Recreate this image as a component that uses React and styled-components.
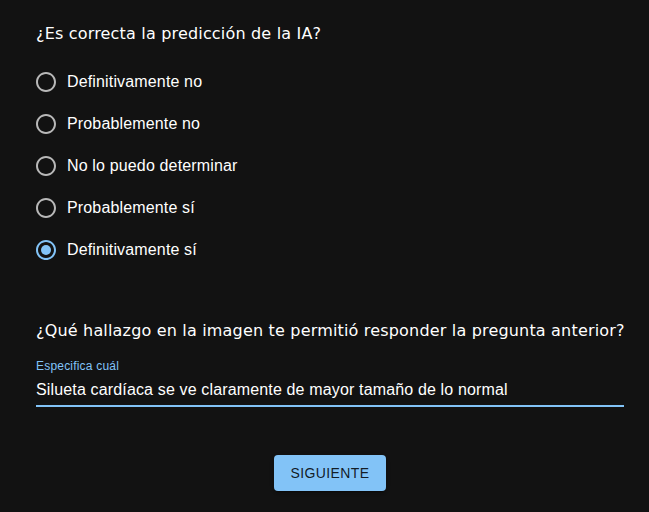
import React, { useState } from "react";
import styled, { createGlobalStyle } from "styled-components";

const Global = createGlobalStyle`
  html, body { margin: 0; padding: 0; background: #121212; }
  body { font-family: "Liberation Sans", Arial, sans-serif; color: #fff; }
  * { box-sizing: border-box; }
`;

const ACCENT = "#82c3f7";

const Page = styled.div`
  width: 649px;
  min-height: 512px;
  background: #121212;
  padding: 22px 25px 0 36px;
  display: flex;
  flex-direction: column;
`;

const Question = styled.div`
  font-family: "DejaVu Sans", Verdana, sans-serif;
  font-size: 16px;
  line-height: 24px;
  letter-spacing: 0.18px;
  white-space: nowrap;
  color: #fff;
  margin-top: ${(p) => p.$mt || 0}px;
`;

const Group = styled.div`
  display: flex;
  flex-direction: column;
  margin-top: 15px;
`;

const Row = styled.label`
  display: flex;
  align-items: center;
  height: 42px;
  margin-left: -11px;
  cursor: pointer;
`;

const RadioBox = styled.span`
  width: 42px;
  height: 42px;
  padding: 9px;
  display: flex;
  align-items: center;
  justify-content: center;
  color: ${(p) => (p.$checked ? ACCENT : "rgba(255,255,255,0.7)")};
  svg { display: block; }
`;

const RowText = styled.span`
  font-size: 16px;
  line-height: 24px;
  letter-spacing: 0.15px;
  color: #fff;
`;

const Field = styled.div`
  display: flex;
  flex-direction: column;
  margin-top: 15px;
`;

const FieldLabel = styled.div`
  font-size: 12px;
  line-height: 16px;
  letter-spacing: 0.2px;
  color: ${ACCENT};
`;

const Input = styled.div`
  font-size: 16px;
  line-height: 23px;
  letter-spacing: 0.15px;
  padding: 4px 0 4px;
  color: #fff;
  border-bottom: 2px solid ${ACCENT};
`;

const Footer = styled.div`
  display: flex;
  justify-content: center;
  margin-top: 48px;
`;

const Button = styled.button`
  background: ${ACCENT};
  color: rgba(0, 0, 0, 0.87);
  border: none;
  border-radius: 4px;
  height: 36px;
  width: 112px;
  font-family: "Liberation Sans", Arial, sans-serif;
  font-size: 14px;
  font-weight: 500;
  letter-spacing: 0.4px;
  text-transform: uppercase;
  box-shadow: 0 3px 1px -2px rgba(0,0,0,0.2), 0 2px 2px 0 rgba(0,0,0,0.14), 0 1px 5px 0 rgba(0,0,0,0.12);
  cursor: pointer;
`;

const RadioIcon = ({ checked }) => (
  <svg width="24" height="24" viewBox="0 0 24 24" fill="currentColor">
    <path d="M12 2C6.48 2 2 6.48 2 12s4.48 10 10 10 10-4.48 10-10S17.52 2 12 2zm0 18c-4.42 0-8-3.58-8-8s3.58-8 8-8 8 3.58 8 8-3.58 8-8 8z" />
    {checked && <circle cx="12" cy="12" r="5" />}
  </svg>
);

const options = [
  "Definitivamente no",
  "Probablemente no",
  "No lo puedo determinar",
  "Probablemente sí",
  "Definitivamente sí",
];

export default function App() {
  const [value, setValue] = useState(4);
  return (
    <>
      <Global />
      <Page>
        <Question>¿Es correcta la predicción de la IA?</Question>
        <Group>
          {options.map((o, i) => (
            <Row key={o} onClick={() => setValue(i)}>
              <RadioBox $checked={value === i}>
                <RadioIcon checked={value === i} />
              </RadioBox>
              <RowText>{o}</RowText>
            </Row>
          ))}
        </Group>
        <Question $mt={48}>
          ¿Qué hallazgo en la imagen te permitió responder la pregunta anterior?
        </Question>
        <Field>
          <FieldLabel>Especifica cuál</FieldLabel>
          <Input>Silueta cardíaca se ve claramente de mayor tamaño de lo normal</Input>
        </Field>
        <Footer>
          <Button>Siguiente</Button>
        </Footer>
      </Page>
    </>
  );
}
